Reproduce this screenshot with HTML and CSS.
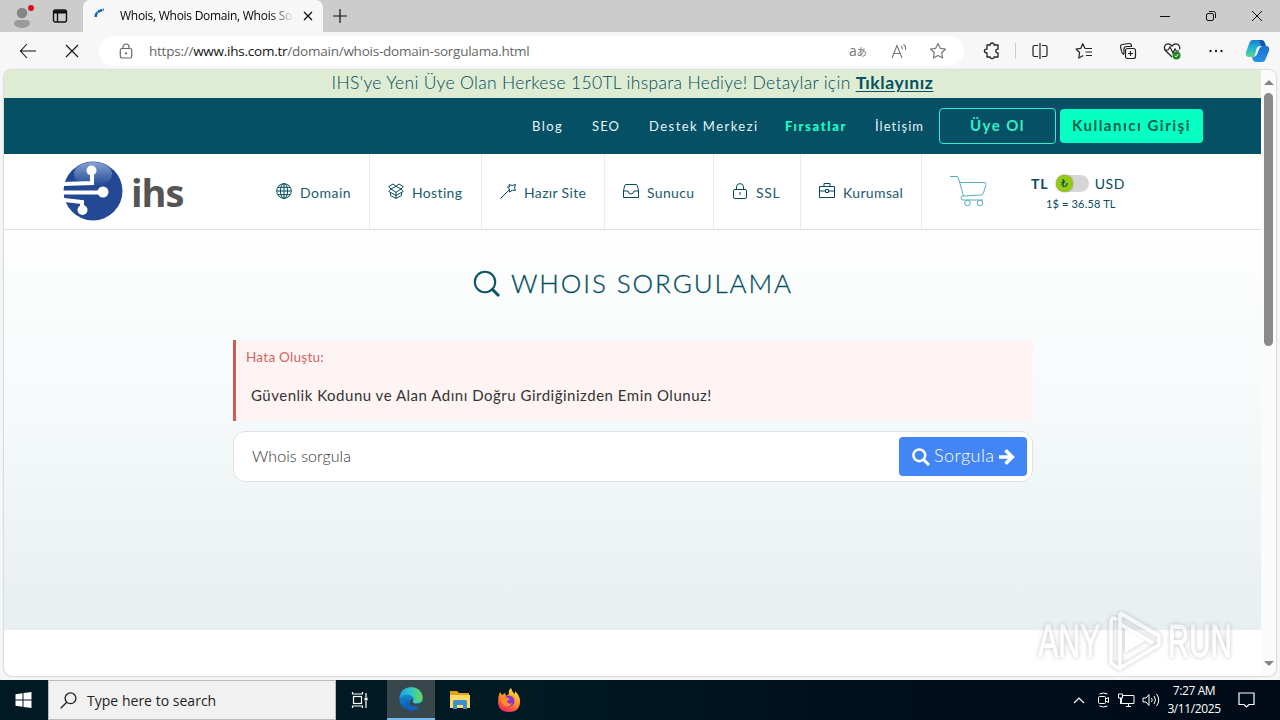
FILE: index.html
```html
<!DOCTYPE html>
<html lang="tr">
<head>
<meta charset="utf-8">
<title>Whois, Whois Domain, Whois Sorgulama</title>
<link rel="stylesheet" href="styles.css">
</head>
<body>
<div class="desktop">
  <header class="tabbar">
    <div class="tab-left">
      <svg class="profile" width="24" height="28" viewBox="0 0 24 28"><circle cx="10" cy="11" r="5.3" fill="#858585"/><path d="M2 22q0-4 4-4h8q4 0 4 4-2 4-8 4t-8-4z" fill="#9b9b9b"/><circle cx="19" cy="6" r="3" fill="#e00b1c"/></svg>
      <svg class="tabs-icon" width="16" height="16" viewBox="0 0 16 16" fill="none" stroke="#111" stroke-width="1.4"><rect x="1.5" y="2" width="13" height="12" rx="2"/><path d="M2 4h12" stroke-width="3"/><path d="M5.5 4v10"/></svg>
    </div>
    <div class="tab">
      <svg class="spinner" width="12" height="12" viewBox="0 0 12 12" fill="none" stroke="#1269b3" stroke-width="2.6"><path d="M1.7 9Q1.5 3 9.8 1.6" stroke-dasharray="5 .7"/></svg>
      <span class="tab-title">Whois, Whois Domain, Whois So</span>
      <svg width="10" height="10" viewBox="0 0 10 10" stroke="#111" stroke-width="1.3"><path d="M1 1l8 8M9 1L1 9"/></svg>
    </div>
    <svg class="plus" width="14" height="14" viewBox="0 0 14 14" stroke="#111" stroke-width="1.2"><path d="M7 0v14M0 7h14"/></svg>
    <div class="window-buttons">
      <svg width="12" height="12" viewBox="0 0 12 12" stroke="#111" fill="none"><path d="M1 6.5h10"/></svg>
      <svg width="12" height="12" viewBox="0 0 12 12" stroke="#111" fill="none"><rect x="1.5" y="3.5" width="7" height="7" rx="1.5"/><path d="M4 1.5h4.5q2 0 2 2V8"/></svg>
      <svg width="12" height="12" viewBox="0 0 12 12" stroke="#111" fill="none"><path d="M1 1l10 10M11 1L1 11"/></svg>
    </div>
  </header>

  <div class="toolbar">
    <svg class="back" width="18" height="16" viewBox="0 0 18 16" fill="none" stroke="#111" stroke-width="1.1"><path d="M8 1L1.5 8 8 15M1.5 8H17"/></svg>
    <svg class="stop" width="14" height="14" viewBox="0 0 14 14" stroke="#111" stroke-width="1.1"><path d="M1 1l12 12M13 1L1 13"/></svg>
    <div class="address">
      <svg width="14" height="16" viewBox="0 0 14 16" fill="none" stroke="#666" stroke-width="1.2"><rect x="1.3" y="5.5" width="11.4" height="9.5" rx="1.8"/><path d="M4 5.500V4a3 3 0 0 1 6 0v1.500"/><circle cx="7" cy="10.300" r=".5" fill="#666"/></svg>
      <span class="url">https://<b>www.ihs.com.tr</b>/domain/whois-domain-sorgulama.html</span>
      <span class="translate">a<small>あ</small></span>
      <svg class="aloud" width="17" height="16" viewBox="0 0 17 16" fill="none" stroke="#777" stroke-width="1.100"><path d="M1 15L6 2.500 11 15M3 10.500h6M10 3q1.800 1.500 1.200 3.500M12.500 1.500q2.800 2 2 5.500"/></svg>
      <svg class="star" width="18" height="18" viewBox="0 0 18 18" fill="none" stroke="#777" stroke-width="1.200" stroke-linejoin="round"><path d="M9 1.500l2.300 4.800 5.200.7-3.800 3.700.9 5.300L9 13.500 4.400 16l.9-5.300L1.500 7l5.200-.7z"/></svg>
    </div>
    <div class="tools">
      <svg width="18" height="18" viewBox="0 0 18 18" fill="none" stroke="#222" stroke-width="1.300" stroke-linejoin="round"><path d="M4 3h3.200q0-2 1.900-2T11 3h4v4.200q-2.200-.2-2.200 1.800t2.200 1.800V15h-4q0 1.700-1.900 1.700T7.200 15H4v-4.200q-2.600 0-2.600-1.800T4 7.200z"/></svg>
      <i class="divider"></i>
      <svg width="18" height="18" viewBox="0 0 18 18" fill="none" stroke="#222" stroke-width="1.200"><path d="M7 3.500H3.500Q2 3.500 2 5v8q0 1.500 1.500 1.500H7M11 3.500h3.500Q16 3.500 16 5v8q0 1.500-1.500 1.500H11M9 1v16"/></svg>
      <svg width="18" height="18" viewBox="0 0 18 18" fill="none" stroke="#222" stroke-width="1.200" stroke-linejoin="round"><path d="M10 6.500L7.800 1.800 5.800 6.300 1 7l3.600 3.500L3.800 16l4.500-2.500M10 6.500h7M10.500 10H17M11 13.500h6"/></svg>
      <svg width="18" height="18" viewBox="0 0 18 18" fill="none" stroke="#222" stroke-width="1.200"><rect x="6.500" y="6.500" width="10" height="10" rx="2"/><path d="M11.500 9v5M9 11.500h5M5 12.500Q3 12 2.500 9L1.500 4.500Q1.300 3 3 2.500L10 1.500Q12 1.300 12.500 3.500V5M5 12V7Q5 4.500 8 4.500h5"/></svg>
      <svg width="18" height="18" viewBox="0 0 18 18" fill="none" stroke="#222" stroke-width="1.200"><path d="M9 15L2.500 8.500Q0 5 3 2.500 6 .7 9 4q3-3.300 6-1.500 2.500 2 1.500 5M1 8h4l2-3 3 6 2-4 1.500 2H16"/><circle cx="13.500" cy="13.500" r="4" fill="#218823" stroke="none"/><path d="M11.800 13.700l1.200 1.200 2.300-2.700" stroke="#fff" stroke-width="1"/></svg>
      <svg width="18" height="18" viewBox="0 0 18 18" fill="#222"><circle cx="3.500" cy="9" r="1.200"/><circle cx="9" cy="9" r="1.200"/><circle cx="14.500" cy="9" r="1.200"/></svg>
      <svg class="copilot" width="25" height="24" viewBox="0 0 25 24"><defs><linearGradient id="ca" x2="0" y2="1"><stop stop-color="#187bd5"/><stop offset=".5" stop-color="#22b6d2"/><stop offset="1" stop-color="#62d58a"/></linearGradient><linearGradient id="cb" x2="0" y2="1"><stop stop-color="#1f6fd0"/><stop offset="1" stop-color="#2492e7"/></linearGradient></defs><path d="M8 1h8q2 0 3 3l1 3h-3q-3 0-4 3l-2 5q-1 3-4 3H4q-4 0-3-5L4 5q1-4 4-4z" fill="url(#ca)"/><path d="M14 1h3q2 0 3 3l1 3h-5z" fill="#1754ad"/><path d="M18 7h3q4 0 3 5l-3 7q-1 4-4 4h-6q-3 0-4-5 4 0 5-3l2-5q1-3 4-3z" fill="url(#cb)"/><path d="M13.500 7.500H17q-2.200.5-3 2.500l-2 5q-.8 2-2.500 2.500l2-7.500q.6-2.200 2-2.500z" fill="#f5fbff"/></svg>
    </div>
  </div>

  <main class="viewport">
    <div class="page">
      <div class="promo"><span>IHS'ye Yeni Üye Olan Herkese 150TL ihspara Hediye! Detaylar için</span> <a>Tıklayınız</a></div>
      <div class="topnav">
        <span class="t-blog">Blog</span><span class="t-seo">SEO</span><span class="t-support">Destek Merkezi</span><span class="t-deals">Fırsatlar</span><span class="t-contact">İletişim</span>
        <a class="signup">Üye Ol</a><a class="login">Kullanıcı Girişi</a>
      </div>
      <nav class="mainnav">
        <div class="logo">
          <svg width="60" height="60" viewBox="0 0 60 60"><defs><linearGradient id="lg" x2="0" y2="1"><stop stop-color="#96b3dc"/><stop offset="1" stop-color="#234894"/></linearGradient></defs><circle cx="30" cy="30" r="29.500" fill="#234894"/><ellipse cx="30" cy="13" rx="19" ry="12" fill="url(#lg)" opacity=".85"/><g fill="none" stroke="#fff"><path d="M0 23l29-1V10" stroke-width="4"/><path d="M0 31.500h39" stroke-width="4"/><path d="M1 39l18 2v10" stroke-width="4"/></g><g fill="#fff"><circle cx="28.500" cy="9.500" r="5"/><circle cx="40" cy="31" r="5.500"/><circle cx="19.500" cy="49" r="5"/></g></svg>
          <span>ihs</span>
        </div>
        <div class="item i-domain"><svg viewBox="0 0 16 16"><circle cx="8" cy="8" r="7.300"/><ellipse cx="8" cy="8" rx="3.600" ry="7.300"/><path d="M.7 8h14.600M8 .7v14.600M2 4.300h12M2 11.700h12"/></svg><span>Domain</span></div>
        <div class="item i-hosting"><svg viewBox="0 0 16 16"><path d="M5 1L.8 3.500 3 6 .8 8.500 8 12.500l7.200-4L13 6l2.200-2.500L11 1 8 3.300zM3 6l5 3.300L13 6 8 3.300zM2.500 10v2.500L8 15.500l5.500-3V10M8 9v6"/></svg><span>Hosting</span></div>
        <div class="item i-site"><svg viewBox="0 0 16 16"><path d="M.5 15.500L9.500 6.500M9 1.500l3 1 3.500-1-1 3.500 1 2.500-3-.3L9.500 9l-.3-3.200L7.500 4h2z"/></svg><span>Hazır Site</span></div>
        <div class="item i-server"><svg viewBox="0 0 16 16"><path d="M3 1.500h10q1 0 1.300 1L15.500 8v6.500H.5V8l1.200-5.500q.3-1 1.300-1zM.5 8H5q.5 3 3 3t3-3h4.500"/></svg><span>Sunucu</span></div>
        <div class="item i-ssl"><svg viewBox="0 0 16 16"><rect x="1.500" y="6.500" width="13" height="9" rx="1.500"/><path d="M4.500 6.500V4q0-3.400 3.500-3.400T11.500 4v2.500M8 9v3"/></svg><span>SSL</span></div>
        <div class="item i-corp"><svg viewBox="0 0 16 16"><path d="M.5 3.500h15v11H.5zM5 3.500v-3h6v3M.5 8h6M9.500 8h6M6.500 6.500h3v3h-3z"/></svg><span>Kurumsal</span></div>
        <svg class="cart" width="38" height="32" viewBox="0 0 38 32" fill="none" stroke="#56aebb" stroke-width="1"><path d="M0 1.500h7q1 0 1.500 2l5 17.500M10 7.500h24q2.500 0 2 2L33.500 18q-.5 2-2.500 2l-17.500 1q-2.500 0-2.500 2t2.500 2H33"/><circle cx="17.500" cy="28" r="2.800"/><circle cx="30" cy="28" r="2.800"/></svg>
        <div class="currency">
          <div class="switch-row"><b>TL</b><i class="switch"><em>₺</em></i><span>USD</span></div>
          <div class="rate">1$ = 36.58 TL</div>
        </div>
      </nav>
      <section class="hero">
        <h1><svg width="28" height="28" viewBox="0 0 28 28" fill="none" stroke="#0b5565"><circle cx="12" cy="12" r="10.200" stroke-width="2.100"/><path d="M18.500 18.500l7.500 7.500" stroke-width="3"/></svg><span>WHOIS SORGULAMA</span></h1>
        <div class="error"><p class="error-title">Hata Oluştu:</p><p class="error-text">Güvenlik Kodunu ve Alan Adını Doğru Girdiğinizden Emin Olunuz!</p></div>
        <div class="search"><span class="placeholder">Whois sorgula</span><a class="query"><svg width="18" height="18" viewBox="0 0 18 18" fill="none" stroke="#fff"><circle cx="7.300" cy="7.300" r="5.900" stroke-width="2.500"/><path d="M11.500 11.500L17 17" stroke-width="3"/></svg><span>Sorgula</span><svg width="16" height="18" viewBox="0 0 16 18" fill="none" stroke="#fff" stroke-width="3.600"><path d="M0 9h13M6.500 2.200L13.300 9l-6.800 6.800"/></svg></a></div>
      </section>
    </div>
    <div class="scrollbar"><i class="up"></i><i class="thumb"></i><i class="down"></i></div>
  </main>

  <footer class="taskbar">
    <svg class="start" width="16" height="16" viewBox="0 0 16 16" fill="#fff"><path d="M0 2.200l7-1v6.300H0zM8 1l8-1v7.500H8zM0 8.500h7v6.300l-7-1zM8 8.500h8V16l-8-1z"/></svg>
    <div class="task-search"><svg width="17" height="17" viewBox="0 0 17 17" fill="none" stroke="#222" stroke-width="1.300"><circle cx="10.500" cy="6.300" r="5.400"/><path d="M6.700 10.200L.7 16.300"/></svg><span>Type here to search</span></div>
    <div class="task view"><svg width="18" height="16" viewBox="0 0 18 16" fill="none" stroke="#fff" stroke-width="1.200"><rect x="2.500" y="4.500" width="8" height="7"/><path d="M1.500 0v2h10V0M1.500 16v-2h10v2M15 1v4M15 9v7"/><path d="M13.500 7h3" stroke-width="3"/></svg></div>
    <div class="task active"><svg width="24" height="24" viewBox="0 0 24 24"><defs><linearGradient id="e1"><stop stop-color="#1c9de1"/><stop offset=".5" stop-color="#32c7c5"/><stop offset="1" stop-color="#6ada58"/></linearGradient><linearGradient id="e2" x2="0" y2="1"><stop stop-color="#1ba3dd"/><stop offset="1" stop-color="#0b56ab"/></linearGradient></defs><circle cx="12" cy="12" r="11.700" fill="url(#e2)"/><path d="M.5 11Q2 .3 12 .3 22 .3 23.700 10q.3 6-6 6.200-4.500 0-4-2 2-2 0-4.500Q7 4.500.5 11z" fill="url(#e1)"/><path d="M8 11q-1 11 14 7-4 6-10 5.700Q4 20 8 11z" fill="#1260b8"/><path d="M13.500 14q0 3 4 3.200 3.500 0 6-2.200l1 3-3 1q-7 1.500-11-1.500-.5-4 3-5.500 1 1 0 2z" fill="#37474c"/></svg></div>
    <div class="task"><svg width="22" height="20" viewBox="0 0 22 20"><path d="M1 1h7l2 2h10v15H1z" fill="#e3a31b"/><path d="M1 5h20v13H1z" fill="#ffda6b"/><path d="M4 19v-7q0-2 2-2h10q2 0 2 2v7h-4v-4H8v4z" fill="#3b91c9"/></svg></div>
    <div class="task"><svg width="24" height="24" viewBox="0 0 24 24"><defs><linearGradient id="ff" x1=".8" x2=".3" y2="1"><stop stop-color="#ffe83d"/><stop offset=".5" stop-color="#ff9327"/><stop offset="1" stop-color="#f5245e"/></linearGradient></defs><path d="M3 4l2 3 3-2 1 3 3-2q-1-4 2-6 1 4 4 6V3q5 5 5 10 0 11-11 11T1 13q0-5 2-9z" fill="url(#ff)"/><circle cx="12" cy="13" r="5.500" fill="#8a36d7"/><path d="M4 12l5-3 4 2-3 2q1 4 5 2-1 4-6 3-4-1-5-6z" fill="#ff8e25"/></svg></div>
    <div class="tray">
      <svg width="12" height="8" viewBox="0 0 12 8" fill="none" stroke="#fff" stroke-width="1.200"><path d="M1 7l5-5 5 5"/></svg>
      <svg width="13" height="16" viewBox="0 0 13 16" fill="none" stroke="#fff"><rect x="1.500" y="4.500" width="7" height="7" rx="1"/><path d="M8.500 7l3-1.500v5L8.500 9M2.500 2q4-2 8 0M2.500 14q4 2 8 0"/></svg>
      <svg width="17" height="14" viewBox="0 0 17 14" fill="none" stroke="#fff"><path d="M5 2.500h11v8H3.500V5M8 13.500h5M10.500 10.500v3M.5 1h4v4h-4zM2.500 5v6"/></svg>
      <svg width="18" height="14" viewBox="0 0 18 14" fill="none" stroke="#fff"><path d="M1 5h3l3-3.500v11L4 9H1zM9.500 5q1.500 2 0 4M12 3q3 4 0 8M14.500 1q4.500 6 0 12"/></svg>
      <div class="clock">7:27 AM<br>3/11/2025</div>
      <svg width="17" height="16" viewBox="0 0 17 16" fill="none" stroke="#fff" stroke-width="1.200"><path d="M1 1h15v11.500h-5L8.500 15 6 12.500H1z"/></svg>
    </div>
  </footer>

  <div class="watermark"><span>ANY</span><svg width="58" height="64" viewBox="0 0 58 64" fill="none" stroke="#fff" stroke-linejoin="round"><path d="M5 12q0-3 3-3l3 2M5 12v42l9 6V13M14 4v35M14 4l39 22v10L14 59" stroke-width="3.500"/><path d="M19 20v24l20-12z" fill="#fff" stroke="none"/><path d="M14 4l39 23M14 15l33 19" stroke-width="4"/></svg><span class="run">RUN</span></div>
</div>
</body>
</html>
```
FILE: styles.css
```css
*{box-sizing:border-box}
body{margin:0;font-family:"Open Sans","Noto Sans",sans-serif}
svg{display:block;flex:none}
p,h1{margin:0;font-weight:300}
i,em{font-style:normal}
.desktop{position:relative;width:1280px;height:720px;display:grid;grid-template-rows:32px 38px 606px 4px 40px;background:#f5f6f7;overflow:hidden}
.tabbar{display:flex;align-items:center;background:#ccc}
.tab-left{display:flex;width:83px;height:32px;align-items:center;padding-left:12px;border-radius:0 0 6px 0}
.tabs-icon{margin-left:16px}
.tab{width:240px;height:32px;display:flex;align-items:center;padding-left:11px;background:#f7f7f7;border-radius:7px 7px 0 0}
.spinner{margin-top:-4px}
.tab-title{width:174px;margin:0 9px 0 14px;font:12px/20px "Open Sans",sans-serif;letter-spacing:-.27px;white-space:nowrap;-webkit-mask-image:linear-gradient(90deg,#000 86%,transparent 100%);mask-image:linear-gradient(90deg,#000 86%,transparent 100%)}
.plus{margin-left:10px}
.window-buttons{display:flex;gap:34px;margin-left:auto;padding-right:17px}
.toolbar{display:flex;align-items:center;background:#f7f7f7}
.back{margin-left:19px}
.stop{margin-left:28px}
.address{display:flex;align-items:center;width:865px;height:30px;margin-left:20px;padding-left:20px;border-radius:15px;background:#fff}
.url{width:700px;margin-left:16px;color:#666;font:13.5px/20px "Open Sans",sans-serif;letter-spacing:-.24px;white-space:nowrap}
.url b{font-weight:400;color:#111}
.translate{width:18px;color:#777;font:14px/16px "Open Sans","Noto Sans CJK JP",sans-serif;white-space:nowrap}
.translate small{font-size:10px}
.aloud{margin-left:24px}
.star{margin-left:21px}
.tools{display:flex;align-items:center;margin-left:19px}
.tools svg{margin-right:26px}
.tools svg:first-child{margin-right:14px}
.divider{width:1px;height:16px;margin-right:15px;background:#ccc}
.tools .copilot{margin:0 0 0 -6px}
.viewport{display:grid;grid-template-columns:1257px 15px;width:1272px;height:606px;margin-left:4px;background:#fff;border-radius:8px;overflow:hidden;box-shadow:0 0 2px #999}
.page{font-family:Lato,sans-serif;color:#034a5d}
.promo{height:28px;background:#ddecd2;text-align:center;font:300 17.5px/26px Lato,sans-serif;white-space:nowrap;letter-spacing:.32px}
.promo a{font-weight:700;letter-spacing:.6px;color:#075160;text-decoration:underline;text-underline-offset:2px}
.topnav{display:flex;align-items:center;height:56px;padding-left:528px;background:#055065;color:#e4f5f7;font-size:13px;letter-spacing:1.45px;white-space:nowrap}
.t-blog{width:60px}.t-seo{width:57px;letter-spacing:1.1px}.t-support{width:136px}.t-deals{width:90px;color:#1dffc3;font-weight:900;letter-spacing:1.65px}.t-contact{width:64px;letter-spacing:1.05px}
.signup,.login{display:flex;align-items:center;justify-content:center;font-size:15px;font-weight:700;letter-spacing:1.5px;padding-bottom:2px;border-radius:4px}
.signup{width:117px;height:36px;border:1px solid #35efc8;color:#35efc8}
.login{width:143px;height:34px;margin-left:4px;background:#06ffc2;color:#07604c}
.mainnav{display:flex;height:76px;border-bottom:1px solid #dce1e2;background:#fff;white-space:nowrap}
.logo{display:flex;align-items:flex-start;width:252px;padding:7px 0 0 59px}
.logo span{margin:8px 0 0 8px;color:#555;font:700 38px/46px "Open Sans",sans-serif;letter-spacing:-1px}
.item{display:flex;align-items:center;height:75px;border-right:1px solid #ececec;font-size:14px;letter-spacing:.35px;color:#1b5a6b;padding:1px 0 0 18px}
.item svg{width:16px;height:16px;margin:-2px 8px 0 0;fill:none;stroke:#034a5d;stroke-width:1}
.i-domain{width:114px;padding-left:20px}.i-domain span{letter-spacing:.5px}.i-hosting{width:112px}.i-site{width:123px}.i-server{width:109px}.i-ssl{width:87px}.i-ssl span{letter-spacing:.7px}.i-corp{width:121px}
.cart{margin:21px 0 0 28px}
.currency{width:94px;margin:20px 0 0 43px}
.switch-row{display:flex;align-items:center;height:19px;font-size:14px}
.switch-row b{width:25px;letter-spacing:.8px}
.switch-row span{letter-spacing:.6px}
.switch{width:33px;height:17px;margin-right:6px;border-radius:9px;background:#d6d6d6}
.switch em{display:block;width:17px;height:17px;border-radius:50%;background:#94cb12;font:11px/17px "DejaVu Sans",sans-serif;text-align:center;box-shadow:0 0 2px #777}
.rate{margin:3px 0 0 15px;font-size:11px;line-height:16px;letter-spacing:.16px}
.hero{height:400px;padding:37px 229px 0;background:linear-gradient(#fefefe 0,#f7fbfb 36%,#e8eff1 100%)}
h1{display:flex;align-items:center;height:34px;padding-left:240px;font:400 26px/34px Lato,sans-serif;letter-spacing:1.9px;white-space:nowrap}
h1 span{margin:-2px 0 0 10px;font-weight:300;-webkit-text-stroke:.3px #0b5565}
.error{width:800px;height:81px;margin-top:39px;padding:7px 0 0 10px;border-left:3px solid #cf5b52;background:#fff4f4}
.error-title{font:400 13.5px/20px Lato,sans-serif;letter-spacing:.27px;color:#d0655e}
.error-text{margin:18px 0 0 5px;font:400 15px/20px Lato,sans-serif;letter-spacing:.51px;color:#333}
.search{display:flex;align-items:center;justify-content:space-between;width:800px;height:51px;margin-top:10px;padding:0 5px 0 18px;border:1px solid #dce3e5;border-radius:12px;background:#fff}
.placeholder{margin-top:-2px;font-size:16px;font-weight:300;letter-spacing:.08px;color:#333}
.query{display:flex;align-items:center;gap:4px;width:128px;height:39px;padding-left:13px;border-radius:4px;background:#4285f4;color:#fff;font-size:18px;font-weight:300}
.query span{margin-top:-3px;letter-spacing:.45px}
.scrollbar{display:flex;flex-direction:column;align-items:center;background:#fbfbfb}
.up,.down{width:0;height:0;border:5px solid transparent}
.up{margin-top:5px;border-bottom-color:#858585}
.thumb{width:9px;height:253px;margin-top:8px;border-radius:5px;background:#8a8a8a}
.down{margin-top:auto;margin-bottom:5px;border-top-color:#858585}
.taskbar{grid-row:5;display:flex;align-items:center;background:linear-gradient(90deg,#001923 0,#001923 42%,#000d1c 75%,#000b18 100%);color:#fff}
.start{margin:0 17px 0 15px;width:17px}
.task-search{display:flex;align-items:center;width:288px;height:40px;margin-left:-1px;padding-left:11px;background:#f1f1f1;border:1px solid #bbb;color:#222;font:14px/20px "Open Sans",sans-serif;white-space:nowrap}
.task-search span{margin:1px 0 0 10px;letter-spacing:.02px}
.task{display:flex;align-items:center;justify-content:center;width:49px;height:40px}
.task.view{width:51px;padding-right:3px}
.task.active{width:48px;background:#37474c;border-bottom:2px solid #76b9ed}
.tray{display:flex;align-items:center;margin-left:auto;padding-right:25px}
.tray svg:nth-child(2){margin-left:12px}
.tray svg:nth-child(3){margin-left:8px}
.tray svg:nth-child(4){margin-left:7px}
.clock{width:60px;margin:0 14px 0 4px;font:12px/18px "Open Sans",sans-serif;letter-spacing:-.4px;text-align:center;white-space:nowrap}
.watermark{position:absolute;left:1038px;top:608px;display:flex;align-items:center;color:#fff;filter:drop-shadow(0 0 2px #888);opacity:.5}
.watermark span{width:65px;font:400 46px/66px "Liberation Sans",sans-serif;-webkit-text-stroke:1px #fff;transform:scaleX(.66);transform-origin:0 50%;white-space:nowrap}
.watermark svg{margin:0 6px 0 3px}
.watermark .run{margin-left:-2px;transform:scaleX(.64)}
```
